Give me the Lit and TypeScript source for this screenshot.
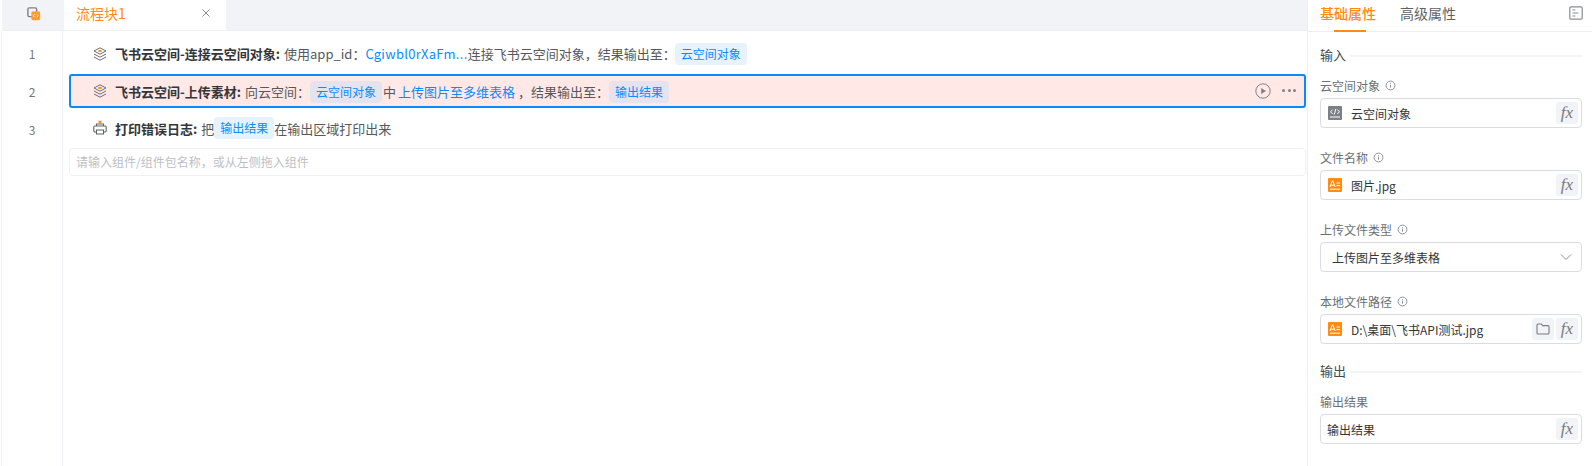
import { LitElement, html, css } from "lit";
import { customElement } from "lit/decorators.js";

const stackIcon = html`<svg class="ic" viewBox="0 0 16 16" width="16" height="16" fill="none" stroke="#6b6f76" stroke-width="1">
  <path d="M8 1.8 14 5 8 8.2 2 5Z"/><path d="M2 8l6 3.2L14 8"/><path d="M2 11l6 3.2L14 11"/>
  <ellipse cx="8" cy="5" rx="2" ry="1.1" fill="#ff8a0d" stroke="none"/></svg>`;
const printIcon = html`<svg class="ic" viewBox="0 0 16 16" width="16" height="16" fill="none" stroke="#5f6368" stroke-width="1.1">
  <path d="M4.5 6V4h7v2"/><rect x="1.8" y="6" width="12.4" height="6" rx="1.2"/><path d="M4.5 10h7v4h-7z" fill="#fff"/>
  <path d="M6.5 0.8l3 2.4M9.5 0.8l-3 2.4" stroke="#ff8a0d"/></svg>`;
const fx = html`<span class="fx">fx</span>`;
const info = html`<svg class="info" viewBox="0 0 12 12" width="11" height="11" fill="none" stroke="#83878e" stroke-width="1"><circle cx="6" cy="6" r="4.8"/><path d="M6 5.2v3.2M6 3.4v.9"/></svg>`;
const textType = html`<svg class="type" viewBox="0 0 14 14" width="14" height="14">
  <rect width="14" height="14" rx="1" fill="#ff8c12"/>
  <path d="M2 9 4.3 3h.6L7.2 9M3 7.2h3.2" fill="none" stroke="#fff" stroke-width="1"/>
  <path d="M8.5 5h3.5M8.5 7.6h3.5M2 11.2h10" stroke="#fff" stroke-width="1"/></svg>`;
const codeType = html`<svg class="type" viewBox="0 0 14 14" width="14" height="14">
  <rect width="14" height="14" rx="1" fill="#7d8187"/>
  <path d="M4.6 3.6 2.6 5.8l2 2.2M9.4 3.6l2 2.2-2 2.2M7.8 3 6.2 8.6M2 11h10" fill="none" stroke="#fff" stroke-width="1"/></svg>`;

@customElement("app-root")
export class AppRoot extends LitElement {
  static styles = css`
    :host { display: block; width: 1592px; height: 466px; overflow: hidden; background: #fff;
      font-family: "Noto Sans CJK SC", "Noto Sans", sans-serif; font-size: 13px; color: #55585c; }
    * { box-sizing: border-box; }
    .app { display: flex; height: 466px; padding-left: 2px; }
    .main { width: 1305px; display: flex; flex-direction: column; }
    .tabbar { height: 31px; flex: none; display: flex; background: #f1f3f6; border-bottom: 1px solid #eceef1; }
    .corner { width: 60px; display: flex; align-items: center; justify-content: center; padding: 0 0 3px 3px; }
    .tab { width: 162px; margin-left: 2px; background: #fff; display: flex; align-items: center; justify-content: space-between;
      padding: 0 16px 5px 12px; color: #ff8a14; font-size: 14px; }
    .close { width: 8px; height: 8px; }
    .body { flex: 1; display: flex; }
    .gutter { width: 62px; flex: none; border-right: 1px solid #eceef1; border-left: 1px solid #f1f2f4; margin-left: -1px; color: #74777c; font-size: 12px; padding-top: 3px; }
    .num { height: 38px; display: flex; align-items: center; justify-content: center; }
    .list { flex: 1; min-width: 0; padding: 5px 1px 0 6px; }
    .row { height: 34px; display: flex; align-items: center; padding-left: 21px; white-space: nowrap; margin-bottom: 3.5px; border: 2px solid transparent; border-radius: 3px; }
    .row.first { padding-top: 1px; }
    .row.sel { background: #ffe8e6; border-color: #0a89ff; }
    .row.sel > span, .row.sel > b { position: relative; top: 1px; }
    .ic { flex: none; margin-right: 7px; }
    b { font-weight: 700; color: #33363a; margin-right: 4px; }
    .link { color: #0a8bff; }
    .wide { letter-spacing: .3px; }
    .pill { background: #e6f3fe; color: #0a8bff; border-radius: 4px; padding: 0 6px; height: 22px; line-height: 22px; display: inline-block; font-size: 12px; }
    .sel .pill { background: #e5e4ee; }
    .pill.a { margin-left: 0; }
    .pill.c { margin-left: -1px; }
    .mid { margin: 0 2px 0 1px; }
    .actions { margin-left: auto; display: flex; align-items: center; gap: 11px; padding-right: 8px; }
    .dots { display: flex; gap: 2.5px; }
    .dots i { width: 3px; height: 3px; border-radius: 50%; background: #7f8388; display: block; }
    .add { height: 28px; border: 1px solid #eef0f2; border-radius: 4px; padding-left: 6px; line-height: 26px; color: #bdbfc3; font-size: 12px; margin-top: -1px; }
    .side { flex: 1; border-left: 1px solid #eceef1; min-width: 0; display: flex; flex-direction: column; }
    .stabs { height: 32px; flex: none; border-bottom: 1px solid #eceef1; display: flex; gap: 24px; padding: 0 12px; font-size: 14px; align-items: flex-start; }
    .stabs span { line-height: 26px; color: #5e6166; position: relative; height: 31px; }
    .stabs .on { color: #ff8a14; font-weight: 500; }
    .stabs .on::after { content: ""; position: absolute; left: 14px; right: 10px; bottom: -1px; height: 2px; background: #ff8a14; }
    .stabs svg { margin-left: auto; margin-top: 6px; margin-right: -3px; }
    .form { padding: 0 10px 0 12px; }
    .sec { display: flex; align-items: center; gap: 4px; font-size: 13px; color: #45484c; height: 20px; margin-top: 12px; }
    .sec::after { content: ""; flex: 1; height: 2px; background: #f4f5f7; margin-top: 3px; }
    .sec.out { margin-top: 16px; }
    .lab { display: flex; align-items: center; gap: 5px; height: 16px; font-size: 12px; color: #6c6f74; margin-top: 13px; margin-bottom: 5px; }
    .field + .lab { margin-top: 21px; }
    .field { height: 30px; border: 1px solid #d9dce6; border-radius: 4px; display: flex; align-items: center; gap: 2px; padding: 0 3px 0 7px; font-size: 12px; color: #33363a; }
    .type { margin-right: 7px; flex: none; }
    .val { flex: 1; white-space: nowrap; }
    .btn { width: 22px; height: 22px; background: #f1f3f6; border-radius: 3px; display: flex; align-items: center; justify-content: center; flex: none; }
    .fx { font-family: "Liberation Serif", serif; font-style: italic; font-size: 17px; color: #777b80; line-height: 22px; width: 22px; height: 22px; text-align: center; background: #f1f3f6; border-radius: 3px; flex: none; }
    .select { padding-left: 11px; padding-right: 9px; }
    .plain { padding-left: 6px; }
  `;

  render() {
    return html`<div class="app">
      <div class="main">
        <div class="tabbar">
          <div class="corner">
            <svg viewBox="0 0 16 16" width="14" height="14" fill="none">
              <rect x="1" y="1" width="10" height="10" rx="1.5" stroke="#7d8187" stroke-width="1.6"/>
              <rect x="5" y="5" width="10" height="10" rx="1.5" fill="#ff9d2e"/>
              <path d="M8.6 8.4 7.2 10l1.4 1.6M11.4 8.4 12.8 10l-1.4 1.6" stroke="#fff" stroke-width=".9"/>
            </svg>
          </div>
          <div class="tab">流程块1
            <svg class="close" viewBox="0 0 10 10" fill="none" stroke="#85888d" stroke-width="1.2"><path d="M.6.6l8.8 8.8M9.4.6.6 9.4"/></svg>
          </div>
        </div>
        <div class="body">
          <div class="gutter">
            <div class="num">1</div><div class="num">2</div><div class="num">3</div>
          </div>
          <div class="list">
            <div class="row first">${stackIcon}<b>飞书云空间-连接云空间对象:</b><span>使用app_id：</span><span class="link wide">Cgiwbl0rXaFm...</span><span>连接飞书云空间对象，结果输出至：</span><span class="pill c">云空间对象</span></div>
            <div class="row sel">${stackIcon}<b>飞书云空间-上传素材:</b><span>向云空间：</span><span class="pill a">云空间对象</span><span class="mid">中</span><span class="link">上传图片至多维表格</span><span>&nbsp;，结果输出至：</span><span class="pill a">输出结果</span>
              <div class="actions">
                <svg viewBox="0 0 16 16" width="16" height="16" fill="none" stroke="#7f8388"><circle cx="8" cy="8" r="7.2"/><path d="M6.2 5v6l4.8-3z" fill="#7f8388" stroke="none"/></svg>
                <div class="dots"><i></i><i></i><i></i></div>
              </div>
            </div>
            <div class="row">${printIcon}<b>打印错误日志:</b><span>把</span><span class="pill">输出结果</span><span>在输出区域打印出来</span></div>
            <div class="add">请输入组件/组件包名称，或从左侧拖入组件</div>
          </div>
        </div>
      </div>
      <div class="side">
        <div class="stabs">
          <span class="on">基础属性</span><span>高级属性</span>
          <svg viewBox="0 0 14 14" width="14" height="14" fill="none" stroke="#8a8d92" stroke-width="1.2"><rect x=".8" y=".8" width="12.4" height="12.4" rx="1.2"/><path d="M3.4 4h3M3.4 7h6M3.4 10h3"/></svg>
        </div>
        <div class="form">
          <div class="sec">输入</div>
          <div class="lab">云空间对象 ${info}</div>
          <div class="field">${codeType}<span class="val">云空间对象</span>${fx}</div>
          <div class="lab">文件名称 ${info}</div>
          <div class="field">${textType}<span class="val">图片.jpg</span>${fx}</div>
          <div class="lab">上传文件类型 ${info}</div>
          <div class="field select"><span class="val">上传图片至多维表格</span>
            <svg viewBox="0 0 12 8" width="12" height="8" fill="none" stroke="#8a8d92"><path d="M1 1.5l5 5 5-5"/></svg></div>
          <div class="lab">本地文件路径 ${info}</div>
          <div class="field">${textType}<span class="val">D:\\桌面\\飞书API测试.jpg</span>
            <span class="btn"><svg viewBox="0 0 14 12" width="14" height="12" fill="none" stroke="#777b80" stroke-width="1.1"><path d="M1 2c0-.6.4-1 1-1h3.4l1.2 1.6H12c.6 0 1 .4 1 1V10c0 .6-.4 1-1 1H2c-.6 0-1-.4-1-1z"/></svg></span>${fx}</div>
          <div class="sec out">输出</div>
          <div class="lab">输出结果</div>
          <div class="field plain"><span class="val">输出结果</span>${fx}</div>
        </div>
      </div>
    </div>`;
  }
}
